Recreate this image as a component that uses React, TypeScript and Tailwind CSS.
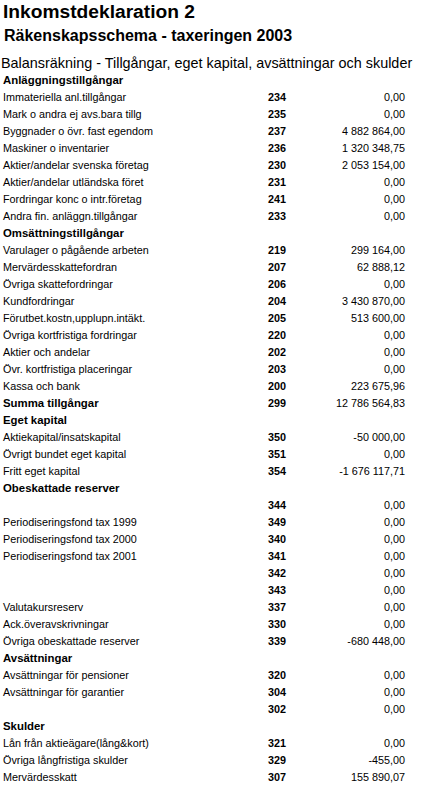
type Line =
  | { kind: "head"; label: string }
  | { kind: "row"; label: string; code: string; value: string; bold?: boolean };

const lines: Line[] = [
  { kind: "head", label: "Anläggningstillgångar" },
  { kind: "row", label: "Immateriella anl.tillgångar", code: "234", value: "0,00" },
  { kind: "row", label: "Mark o andra ej avs.bara tillg", code: "235", value: "0,00" },
  { kind: "row", label: "Byggnader o övr. fast egendom", code: "237", value: "4 882 864,00" },
  { kind: "row", label: "Maskiner o inventarier", code: "236", value: "1 320 348,75" },
  { kind: "row", label: "Aktier/andelar svenska företag", code: "230", value: "2 053 154,00" },
  { kind: "row", label: "Aktier/andelar utländska föret", code: "231", value: "0,00" },
  { kind: "row", label: "Fordringar konc o intr.företag", code: "241", value: "0,00" },
  { kind: "row", label: "Andra fin. anläggn.tillgångar", code: "233", value: "0,00" },
  { kind: "head", label: "Omsättningstillgångar" },
  { kind: "row", label: "Varulager o pågående arbeten", code: "219", value: "299 164,00" },
  { kind: "row", label: "Mervärdesskattefordran", code: "207", value: "62 888,12" },
  { kind: "row", label: "Övriga skattefordringar", code: "206", value: "0,00" },
  { kind: "row", label: "Kundfordringar", code: "204", value: "3 430 870,00" },
  { kind: "row", label: "Förutbet.kostn,upplupn.intäkt.", code: "205", value: "513 600,00" },
  { kind: "row", label: "Övriga kortfristiga fordringar", code: "220", value: "0,00" },
  { kind: "row", label: "Aktier och andelar", code: "202", value: "0,00" },
  { kind: "row", label: "Övr. kortfristiga placeringar", code: "203", value: "0,00" },
  { kind: "row", label: "Kassa och bank", code: "200", value: "223 675,96" },
  { kind: "row", label: "Summa tillgångar", code: "299", value: "12 786 564,83", bold: true },
  { kind: "head", label: "Eget kapital" },
  { kind: "row", label: "Aktiekapital/insatskapital", code: "350", value: "-50 000,00" },
  { kind: "row", label: "Övrigt bundet eget kapital", code: "351", value: "0,00" },
  { kind: "row", label: "Fritt eget kapital", code: "354", value: "-1 676 117,71" },
  { kind: "head", label: "Obeskattade reserver" },
  { kind: "row", label: "", code: "344", value: "0,00" },
  { kind: "row", label: "Periodiseringsfond tax 1999", code: "349", value: "0,00" },
  { kind: "row", label: "Periodiseringsfond tax 2000", code: "340", value: "0,00" },
  { kind: "row", label: "Periodiseringsfond tax 2001", code: "341", value: "0,00" },
  { kind: "row", label: "", code: "342", value: "0,00" },
  { kind: "row", label: "", code: "343", value: "0,00" },
  { kind: "row", label: "Valutakursreserv", code: "337", value: "0,00" },
  { kind: "row", label: "Ack.överavskrivningar", code: "330", value: "0,00" },
  { kind: "row", label: "Övriga obeskattade reserver", code: "339", value: "-680 448,00" },
  { kind: "head", label: "Avsättningar" },
  { kind: "row", label: "Avsättningar för pensioner", code: "320", value: "0,00" },
  { kind: "row", label: "Avsättningar för garantier", code: "304", value: "0,00" },
  { kind: "row", label: "", code: "302", value: "0,00" },
  { kind: "head", label: "Skulder" },
  { kind: "row", label: "Lån från aktieägare(lång&kort)", code: "321", value: "0,00" },
  { kind: "row", label: "Övriga långfristiga skulder", code: "329", value: "-455,00" },
  { kind: "row", label: "Mervärdesskatt", code: "307", value: "155 890,07" },
];

export default function App() {
  return (
    <div className="w-[438px] min-h-[795px] bg-white text-black font-['Liberation_Sans',Arial,sans-serif] pl-[3px]">
      <div className="h-[24px] leading-[24px] text-[19.2px] font-bold">
        Inkomstdeklaration 2
      </div>
      <div className="h-[24px] leading-[24px] text-[16px] font-bold pl-[1px]">
        Räkenskapsschema - taxeringen 2003
      </div>
      <div className="pt-[6px]">
        <div className="h-[18px] leading-[18px] text-[14.4px] whitespace-nowrap -ml-[2px]">
          Balansräkning - Tillgångar, eget kapital, avsättningar och skulder
        </div>
      </div>

      {lines.map((line, i) =>
        line.kind === "head" ? (
          <div
            key={i}
            className="h-[17px] leading-[17px] text-[11.4px] font-bold whitespace-nowrap"
          >
            {line.label}
          </div>
        ) : (
          <div
            key={i}
            className="grid grid-cols-[247px_36px_119px] h-[17px] leading-[17px] whitespace-nowrap"
          >
            <div className={line.bold ? "text-[11.4px] font-bold" : "text-[10.8px]"}>
              {line.label}
            </div>
            <div className="text-[10.8px] font-bold text-right">{line.code}</div>
            <div className="text-[10.8px] text-right">{line.value}</div>
          </div>
        )
      )}
    </div>
  );
}
